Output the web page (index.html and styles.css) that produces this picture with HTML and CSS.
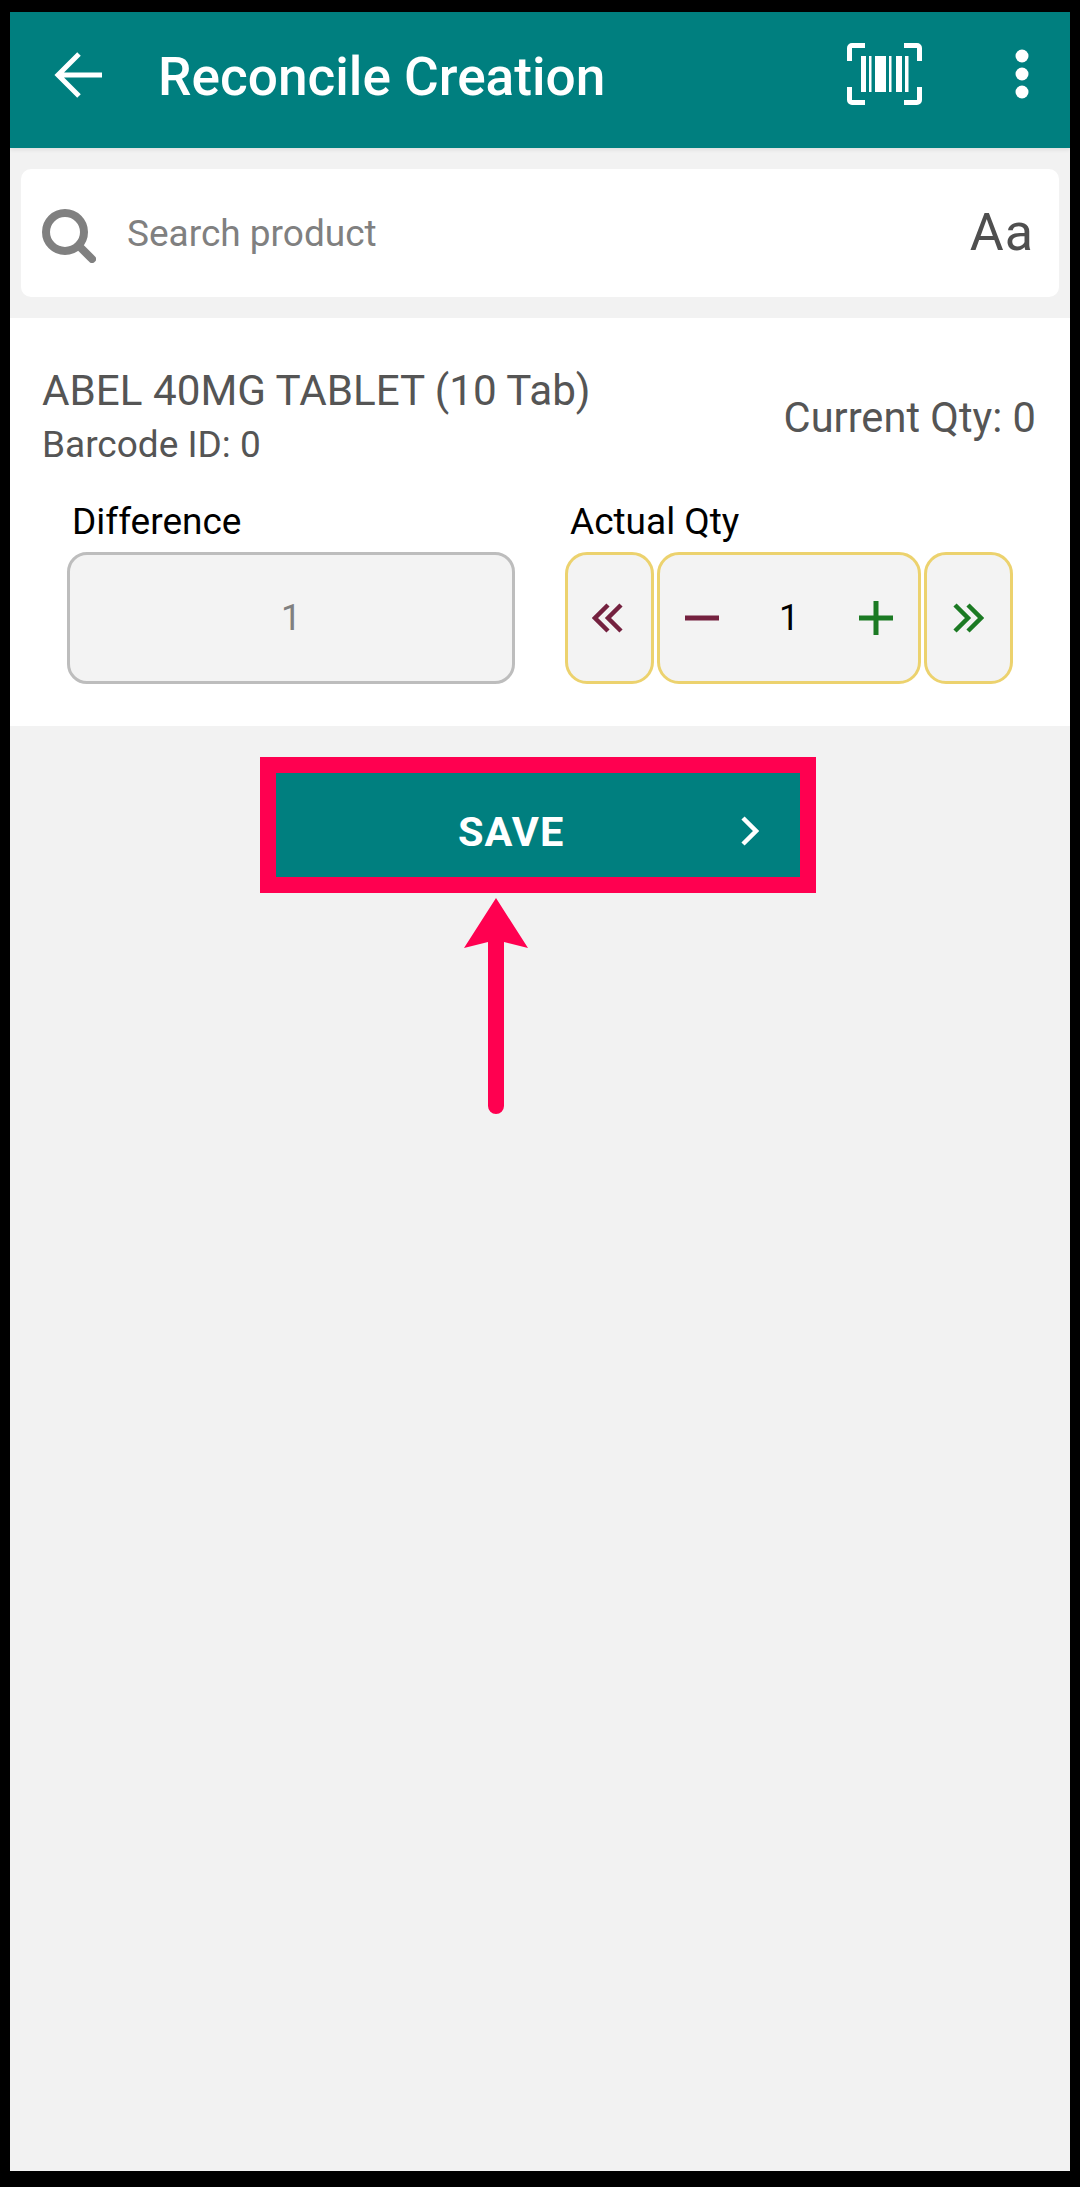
FILE: index.html
```html
<!DOCTYPE html>
<html>
<head>
    <title>Reconcile Creation</title>
    <link rel="stylesheet" href="styles.css">
</head>
<body>
    <div class="app">
        <div class="toolbar">
            <svg class="back-icon" viewBox="0 0 50 48"><path d="M48 24H5M25 3L4 24l21 21" fill="none" stroke="#fff" stroke-width="5"/></svg>
            <div class="toolbar-title">Reconcile Creation</div>
            <svg class="barcode-icon" viewBox="0 0 75 62">
                <path d="M18 2.5H5a2.5 2.5 0 0 0-2.5 2.5V18M57 2.5h13a2.5 2.5 0 0 1 2.5 2.5V18M18 59.5H5a2.5 2.5 0 0 1-2.5-2.5V44M57 59.5h13a2.5 2.5 0 0 0 2.5-2.5V44" fill="none" stroke="#fff" stroke-width="5"/>
                <path d="M14 13h5v36h-5zM22 13h2.5v36H22zM28 13h11v36H28zM42 13h2.5v36H42zM49 13h6v36h-6zM58 13h3.5v36H58z" fill="#fff"/>
            </svg>
            <svg class="more-icon" viewBox="0 0 14 50"><circle cx="7" cy="7" r="6.5" fill="#fff"/><circle cx="7" cy="25" r="6.5" fill="#fff"/><circle cx="7" cy="43" r="6.5" fill="#fff"/></svg>
        </div>

        <div class="search-card">
            <svg class="search-icon" viewBox="0 0 54 54"><circle cx="23" cy="23" r="19" fill="none" stroke="#808080" stroke-width="8"/><path d="M37 37l13 13" stroke="#808080" stroke-width="8" stroke-linecap="round"/></svg>
            <div class="search-text">Search product</div>
            <div class="font-toggle">Aa</div>
        </div>

        <div class="product-panel">
            <div class="product-top">
                <div>
                    <div class="product-name">ABEL 40MG TABLET (10 Tab)</div>
                    <div class="product-barcode">Barcode ID: 0</div>
                </div>
                <div class="current-qty">Current Qty: 0</div>
            </div>
            <div class="qty-row">
                <div class="diff-col">
                    <div class="field-label">Difference</div>
                    <div class="diff-box">1</div>
                </div>
                <div class="actual-col">
                    <div class="field-label">Actual Qty</div>
                    <div class="stepper">
                        <div class="step-box step-side">
                            <svg class="chev chev-left" viewBox="0 0 32 30"><path d="M16 2L3 15l13 13M29 2L16 15l13 13" fill="none" stroke="#74213f" stroke-width="4.5"/></svg>
                        </div>
                        <div class="step-box step-main">
                            <svg class="sign" viewBox="0 0 36 36"><path d="M1 18h34" stroke="#74213f" stroke-width="5"/></svg>
                            <div class="step-value">1</div>
                            <svg class="sign" viewBox="0 0 36 36"><path d="M1 18h34M18 1v34" stroke="#1b7a23" stroke-width="5"/></svg>
                        </div>
                        <div class="step-box step-side">
                            <svg class="chev chev-right" viewBox="0 0 32 30"><path d="M3 2l13 13L3 28M16 2l13 13-13 13" fill="none" stroke="#1b7a23" stroke-width="4.5"/></svg>
                        </div>
                    </div>
                </div>
            </div>
        </div>

        <div class="save-btn">
            <div class="save-label">SAVE</div>
            <svg class="save-chev" viewBox="0 0 18 30"><path d="M2 2l13 13L2 28" fill="none" stroke="#fff" stroke-width="4.5"/></svg>
        </div>

        <!-- annotation arrow pointing at the button -->
        <svg class="hint-arrow" viewBox="0 0 66 216">
            <path d="M33 0L65 50 41 44V208a8 8 0 0 1-16 0V44L1 50z" fill="#ff0050"/>
        </svg>
    </div>
</body>
</html>
```

FILE: styles.css
```css
body {
    margin: 0;
    background: #000;
    font-family: 'Roboto', sans-serif;
}
.app {
    position: relative;
    width: 1060px;
    height: 2159px;
    margin: 12px 10px 0;
    background: #f2f2f2;
    overflow: hidden;
}
.toolbar {
    display: flex;
    align-items: center;
    height: 136px;
    background: #007f7f;
    box-shadow: 0 2px 4px rgba(0, 0, 0, 0.08);
}
.back-icon {
    width: 50px;
    height: 48px;
    margin-left: 44px;
    margin-top: -10px;
}
.toolbar-title {
    margin-left: 54px;
    margin-top: -6px;
    color: #fff;
    font-size: 53.2px;
    font-weight: 500;
    flex: 1;
}
.barcode-icon {
    width: 75px;
    height: 62px;
    margin-top: -12px;
}
.more-icon {
    width: 14px;
    height: 50px;
    margin: -12px 41px 0 93px;
}
.search-card {
    display: flex;
    align-items: center;
    height: 128px;
    margin: 21px 11px 0;
    background: #fff;
    border-radius: 10px;
}
.search-icon {
    width: 54px;
    height: 54px;
    margin-left: 21px;
    margin-top: 6px;
}
.search-text {
    flex: 1;
    margin-left: 31px;
    color: #808080;
    font-size: 37px;
}
.font-toggle {
    margin-right: 25px;
    margin-top: -2px;
    color: #4f4f4f;
    font-size: 52px;
    letter-spacing: 1px;
}
.product-panel {
    height: 408px;
    margin-top: 21px;
    background: #fff;
    box-sizing: border-box;
    padding-top: 48px;
}
.product-top {
    display: flex;
    justify-content: space-between;
    align-items: center;
    padding: 0 34px 0 32px;
}
.product-name {
    color: #555;
    font-size: 42.2px;
    line-height: 50px;
}
.product-barcode {
    margin-top: 4px;
    color: #555;
    font-size: 37px;
    line-height: 50px;
}
.current-qty {
    margin-top: -2px;
    color: #555;
    font-size: 41.6px;
}
.qty-row {
    display: flex;
    margin-top: 31px;
    padding-left: 57px;
}
.field-label {
    color: #000;
    font-size: 37px;
    line-height: 42px;
    margin-bottom: 9px;
}
.diff-col {
    width: 448px;
}
.diff-col .field-label {
    margin-left: 5px;
}
.diff-box {
    display: flex;
    align-items: center;
    justify-content: center;
    box-sizing: border-box;
    height: 132px;
    background: #f3f3f3;
    border: 3px solid #bdbdbd;
    border-radius: 20px;
    color: #808080;
    font-size: 36px;
}
.actual-col {
    margin-left: 50px;
}
.actual-col .field-label {
    margin-left: 5px;
}
.stepper {
    display: flex;
    gap: 3px;
}
.step-box {
    display: flex;
    align-items: center;
    justify-content: center;
    box-sizing: border-box;
    height: 132px;
    background: #f3f3f3;
    border: 3px solid #ecd26e;
    border-radius: 22px;
}
.step-side {
    width: 89px;
}
.step-main {
    width: 264px;
    justify-content: space-between;
    padding: 0 24px;
}
.chev {
    width: 32px;
    height: 30px;
}
.chev-left {
    margin-right: 3px;
}
.chev-right {
    margin-right: 1px;
}
.sign {
    width: 36px;
    height: 36px;
}
.step-value {
    color: #000;
    font-size: 36px;
}
.save-btn {
    display: flex;
    align-items: center;
    box-sizing: border-box;
    width: 524px;
    height: 104px;
    margin: 47px 0 0 266px;
    padding: 12px 41px 0 0;
    background: #007f7f;
    outline: 16px solid #ff0050;
}
.save-label {
    flex: 1;
    padding-left: 182px;
    color: #fff;
    font-size: 41.5px;
    font-weight: 700;
    letter-spacing: 1px;
}
.save-chev {
    width: 18px;
    height: 30px;
}
.hint-arrow {
    position: absolute;
    left: 453px;
    top: 886px;
    width: 66px;
    height: 216px;
}
```
